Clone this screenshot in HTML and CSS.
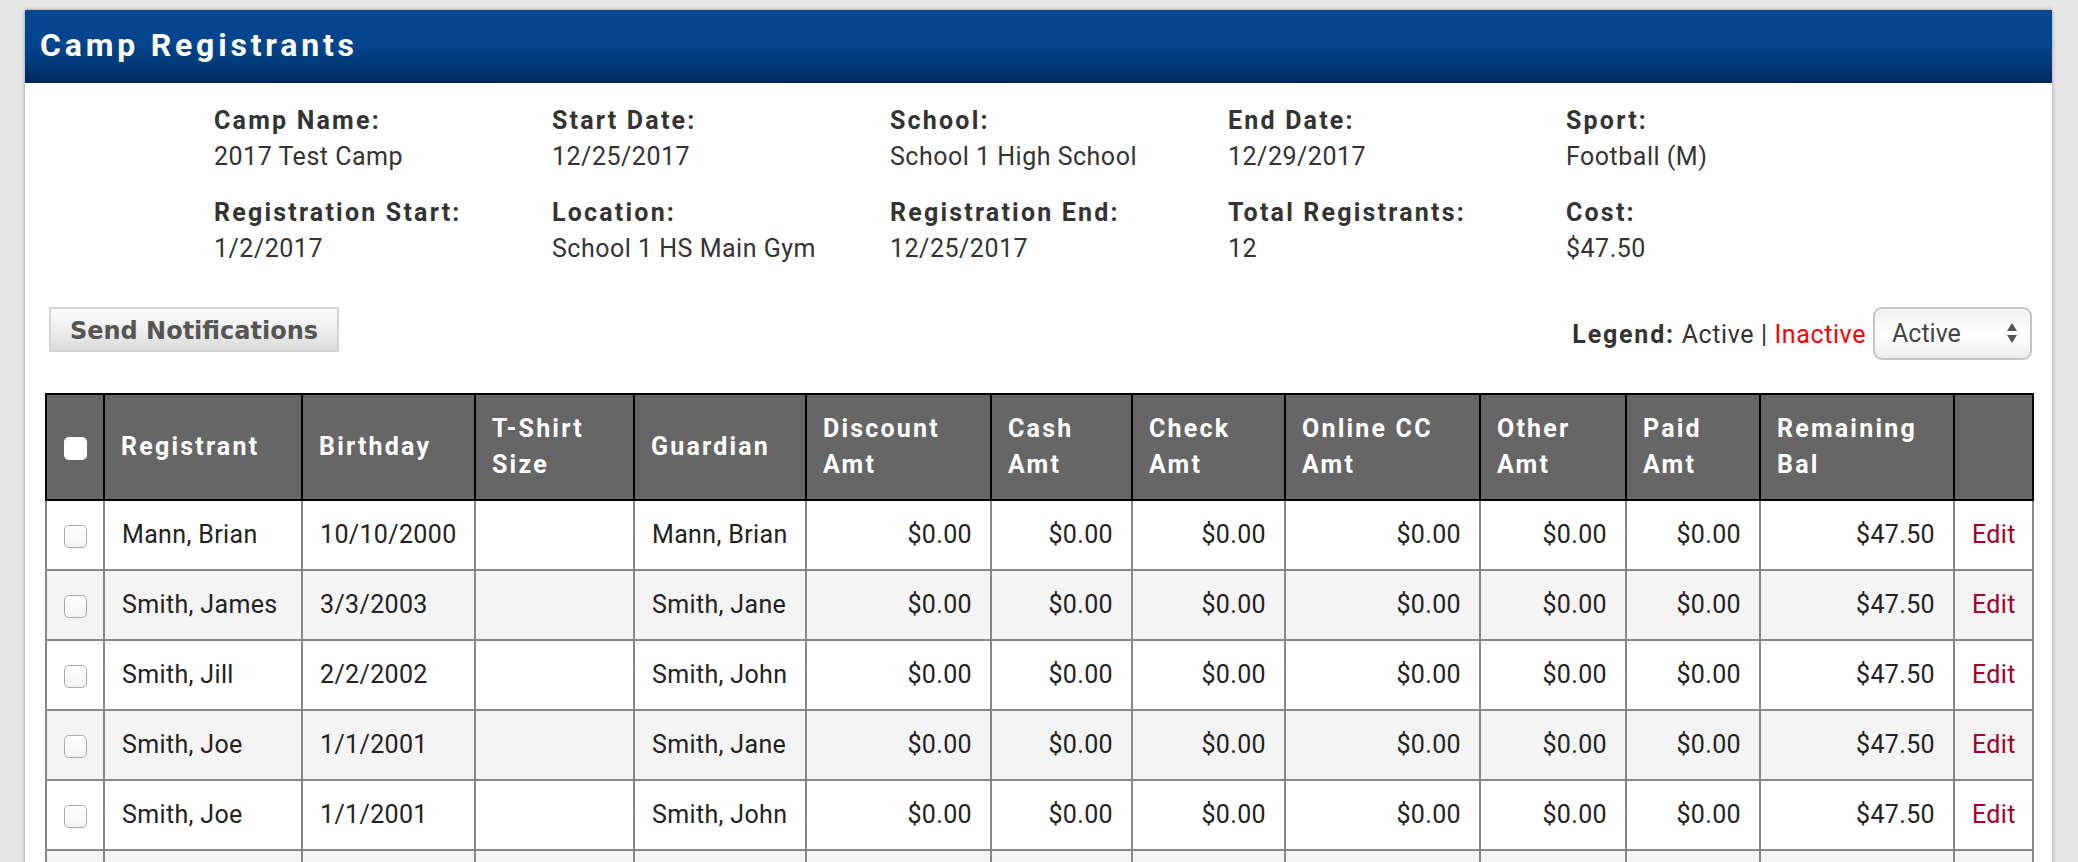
FILE: index.html
```html
<!DOCTYPE html>
<html lang="en">
<head>
<meta charset="utf-8">
<title>Camp Registrants</title>
<link rel="stylesheet" href="styles.css">
</head>
<body>
<div class="panel">
  <div class="panel-head">Camp Registrants</div>
  <div class="panel-body">
    <div class="info">
      <div class="item"><div class="lbl">Camp Name:</div><div class="val">2017 Test Camp</div></div>
      <div class="item"><div class="lbl">Start Date:</div><div class="val">12/25/2017</div></div>
      <div class="item"><div class="lbl">School:</div><div class="val">School 1 High School</div></div>
      <div class="item"><div class="lbl">End Date:</div><div class="val">12/29/2017</div></div>
      <div class="item"><div class="lbl">Sport:</div><div class="val">Football (M)</div></div>
      <div class="item"><div class="lbl">Registration Start:</div><div class="val">1/2/2017</div></div>
      <div class="item"><div class="lbl">Location:</div><div class="val">School 1 HS Main Gym</div></div>
      <div class="item"><div class="lbl">Registration End:</div><div class="val">12/25/2017</div></div>
      <div class="item"><div class="lbl">Total Registrants:</div><div class="val">12</div></div>
      <div class="item"><div class="lbl">Cost:</div><div class="val">$47.50</div></div>
    </div>

    <div class="toolbar">
      <button class="btn" type="button">Send Notifications</button>
      <div class="legend-group">
        <span class="legend"><b>Legend:</b> Active | <span class="inactive">Inactive</span></span>
        <div class="select-wrap">
          <select class="status">
            <option>Active</option>
            <option>Inactive</option>
            <option>All</option>
          </select>
          <svg class="select-arrows" width="12" height="22" viewBox="0 0 12 22"><path d="M6 1 L11 9 H1 Z" fill="#555"/><path d="M6 21 L11 13 H1 Z" fill="#555"/></svg>
        </div>
      </div>
    </div>

    <table class="grid">
      <colgroup>
        <col class="w-chk"><col class="w-reg"><col class="w-bday"><col class="w-shirt"><col class="w-guard">
        <col class="w-disc"><col class="w-cash"><col class="w-check"><col class="w-online"><col class="w-other">
        <col class="w-paid"><col class="w-rem"><col class="w-edit">
      </colgroup>
      <thead>
        <tr>
          <th class="chk"><span class="cb cb-head"></span></th>
          <th>Registrant</th>
          <th>Birthday</th>
          <th>T-Shirt<br>Size</th>
          <th>Guardian</th>
          <th>Discount<br>Amt</th>
          <th>Cash<br>Amt</th>
          <th>Check<br>Amt</th>
          <th>Online CC<br>Amt</th>
          <th>Other<br>Amt</th>
          <th>Paid<br>Amt</th>
          <th>Remaining<br>Bal</th>
          <th></th>
        </tr>
      </thead>
      <tbody>
        <tr>
          <td class="chk"><span class="cb"></span></td>
          <td>Mann, Brian</td><td>10/10/2000</td><td></td><td>Mann, Brian</td>
          <td class="num">$0.00</td><td class="num">$0.00</td><td class="num">$0.00</td><td class="num">$0.00</td>
          <td class="num">$0.00</td><td class="num">$0.00</td><td class="num">$47.50</td><td><a class="edit" href="#">Edit</a></td>
        </tr>
        <tr>
          <td class="chk"><span class="cb"></span></td>
          <td>Smith, James</td><td>3/3/2003</td><td></td><td>Smith, Jane</td>
          <td class="num">$0.00</td><td class="num">$0.00</td><td class="num">$0.00</td><td class="num">$0.00</td>
          <td class="num">$0.00</td><td class="num">$0.00</td><td class="num">$47.50</td><td><a class="edit" href="#">Edit</a></td>
        </tr>
        <tr>
          <td class="chk"><span class="cb"></span></td>
          <td>Smith, Jill</td><td>2/2/2002</td><td></td><td>Smith, John</td>
          <td class="num">$0.00</td><td class="num">$0.00</td><td class="num">$0.00</td><td class="num">$0.00</td>
          <td class="num">$0.00</td><td class="num">$0.00</td><td class="num">$47.50</td><td><a class="edit" href="#">Edit</a></td>
        </tr>
        <tr>
          <td class="chk"><span class="cb"></span></td>
          <td>Smith, Joe</td><td>1/1/2001</td><td></td><td>Smith, Jane</td>
          <td class="num">$0.00</td><td class="num">$0.00</td><td class="num">$0.00</td><td class="num">$0.00</td>
          <td class="num">$0.00</td><td class="num">$0.00</td><td class="num">$47.50</td><td><a class="edit" href="#">Edit</a></td>
        </tr>
        <tr>
          <td class="chk"><span class="cb"></span></td>
          <td>Smith, Joe</td><td>1/1/2001</td><td></td><td>Smith, John</td>
          <td class="num">$0.00</td><td class="num">$0.00</td><td class="num">$0.00</td><td class="num">$0.00</td>
          <td class="num">$0.00</td><td class="num">$0.00</td><td class="num">$47.50</td><td><a class="edit" href="#">Edit</a></td>
        </tr>
        <tr>
          <td class="chk"><span class="cb"></span></td>
          <td>Smith, Julie</td><td>4/4/2004</td><td></td><td>Smith, Jane</td>
          <td class="num">$0.00</td><td class="num">$0.00</td><td class="num">$0.00</td><td class="num">$0.00</td>
          <td class="num">$0.00</td><td class="num">$0.00</td><td class="num">$47.50</td><td><a class="edit" href="#">Edit</a></td>
        </tr>
        <tr>
          <td class="chk"><span class="cb"></span></td>
          <td>Smith, Julie</td><td>4/4/2004</td><td></td><td>Smith, John</td>
          <td class="num">$0.00</td><td class="num">$0.00</td><td class="num">$0.00</td><td class="num">$0.00</td>
          <td class="num">$0.00</td><td class="num">$0.00</td><td class="num">$47.50</td><td><a class="edit" href="#">Edit</a></td>
        </tr>
      </tbody>
    </table>
  </div>
</div>
</body>
</html>
```
FILE: styles.css
```css
* { box-sizing: border-box; }

html, body {
  margin: 0;
  background: #e6e6e6;
}

body {
  padding: 10px 26px 0 25px;
  font-family: Roboto, "Liberation Sans", Arial, sans-serif;
  font-size: 25px;
  color: #333;
}

.panel {
  background: #fff;
  box-shadow: 0 0 4px rgba(0, 0, 0, 0.35);
}

.panel-head {
  height: 73px;
  padding: 15px 15px 0 15px;
  line-height: 40px;
  font-size: 32px;
  font-weight: 700;
  letter-spacing: 3.8px;
  color: #fff;
  background: linear-gradient(to bottom, #04468f 0%, #03458d 45%, #023a78 75%, #00275a 100%);
}

.panel-body {
  padding: 20px 20px 0 20px;
}

/* camp info */
.info {
  display: grid;
  grid-template-columns: repeat(5, 338px);
  row-gap: 20px;
  padding-left: 169px;
}

.lbl {
  line-height: 36px;
  font-weight: 700;
  letter-spacing: 2.2px;
  color: #333;
}

.val {
  line-height: 36px;
  letter-spacing: 0.5px;
  color: #333;
}

/* toolbar */
.toolbar {
  display: flex;
  justify-content: space-between;
  align-items: flex-start;
  margin-top: 40px;
}

.btn {
  margin-left: 4px;
  height: 45px;
  width: 290px;
  padding: 3px 0 0 0;
  font-family: "DejaVu Sans", Verdana, sans-serif;
  font-size: 24px;
  font-weight: 700;
  color: #555;
  background: linear-gradient(to bottom, #fbfbfb 0%, #efefef 50%, #dadada 100%);
  border: 2px solid #d2d2d2;
  border-radius: 0;
}

.legend-group {
  display: flex;
  align-items: center;
  height: 53px;
}

.legend {
  color: #333;
  letter-spacing: 0.6px;
  margin-right: 7px;
  padding-top: 2px;
}

.legend b {
  font-weight: 700;
  letter-spacing: 1.8px;
}

.inactive {
  color: #f00;
}

.select-wrap {
  position: relative;
  width: 159px;
  height: 53px;
}

.status {
  -webkit-appearance: none;
  appearance: none;
  width: 100%;
  height: 100%;
  padding: 0 0 0 17px;
  font-family: Roboto, "Liberation Sans", Arial, sans-serif;
  font-size: 25px;
  color: #444;
  border: 2px solid #c4c4c4;
  border-radius: 9px;
  background: linear-gradient(to bottom, #f1f1f1 0%, #fafafa 35%, #ffffff 55%, #ececec 100%);
  box-shadow: inset 0 1px 2px rgba(255, 255, 255, 0.9);
  outline: none;
}

.select-arrows {
  position: absolute;
  right: 14px;
  top: 15px;
  pointer-events: none;
}

/* table */
.grid {
  margin-top: 33px;
  width: 1987px;
  table-layout: fixed;
  border-collapse: collapse;
  color: #222;
}

.w-chk { width: 58px; }
.w-reg { width: 198px; }
.w-bday { width: 173px; }
.w-shirt { width: 159px; }
.w-guard { width: 172px; }
.w-disc { width: 185px; }
.w-cash { width: 141px; }
.w-check { width: 153px; }
.w-online { width: 195px; }
.w-other { width: 146px; }
.w-paid { width: 134px; }
.w-rem { width: 194px; }
.w-edit { width: 79px; }

.grid th {
  background: #666;
  color: #fff;
  border: 2px solid #000;
  padding: 15px 16px;
  height: 106px;
  line-height: 36px;
  font-weight: 700;
  letter-spacing: 2.2px;
  text-align: left;
  vertical-align: middle;
}

.grid td {
  border: 2px solid #888;
  padding: 0 17px;
  height: 70px;
  line-height: 36px;
  letter-spacing: 0.35px;
  vertical-align: middle;
  white-space: nowrap;
}

.grid tbody tr:nth-child(even) td {
  background: #f4f4f4;
}

.grid tbody tr:nth-child(odd) td {
  background: #fff;
}

.grid tbody tr:first-child td {
  border-top-color: #000;
}

.grid .chk {
  padding: 0;
  text-align: center;
}

.grid td.num {
  text-align: right;
  padding-right: 18px;
}

.cb {
  display: inline-block;
  width: 23px;
  height: 23px;
  vertical-align: middle;
  border: 1.5px solid #a9a9a9;
  border-radius: 5px;
  background: linear-gradient(to bottom, #ffffff, #f4f4f4);
}

.cb-head {
  border: none;
  background: #fff;
  border-radius: 5px;
}

.edit {
  color: #a0002b;
  text-decoration: none;
}
```
